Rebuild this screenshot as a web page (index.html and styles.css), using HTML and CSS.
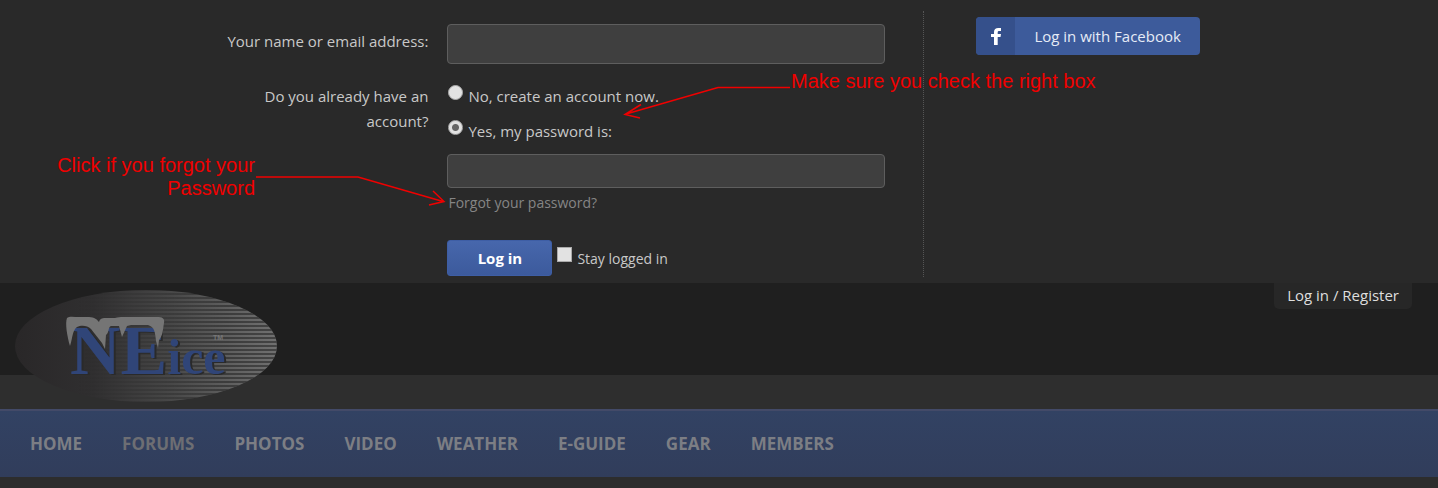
FILE: index.html
```
<!DOCTYPE html>
<html lang="en">
<head>
  <meta charset="UTF-8">
  <title>NEice - Log in</title>
  <meta name="viewport" content="width=device-width, initial-scale=1.0">
  <link rel="stylesheet" href="styles.css">
</head>
<body>

  <!-- Login panel -->
  <section class="login-panel">
    <form class="login-form">
      <label class="form-label" for="login">Your name or email address:</label>
      <input type="text" id="login" class="text-input tall">

      <div class="form-label" id="accountLabel">Do you already have an account?</div>
      <div class="form-field" role="radiogroup" aria-labelledby="accountLabel">
        <label class="choice"><input type="radio" name="register" value="1"> No, create an account now.</label>
        <label class="choice"><input type="radio" name="register" value="0" checked> Yes, my password is:</label>
        <input type="password" id="password" class="text-input" aria-label="Password">
        <a href="#" class="forgot">Forgot your password?</a>
      </div>

      <div class="form-submit">
        <button type="submit" class="login-button">Log in</button>
        <label class="choice small"><input type="checkbox" name="remember"> Stay logged in</label>
      </div>

      <!-- Help notes -->
      <p class="note note-box">Make sure you check the right box</p>
      <p class="note note-forgot">Click if you forgot your Password</p>
      <svg class="note-arrows" width="924" height="283" viewBox="0 0 924 283" fill="none" stroke="#f00000" stroke-width="1.5">
        <path d="M790 87.500H718L626 114M641 104.500L625 114.500L640 118"/>
        <path d="M256 177H358L443 201.500M433 191L444 201.500L429 205"/>
      </svg>
    </form>

    <aside class="login-social">
      <a href="#" class="fb-button">
        <span class="fb-icon">
          <svg width="10" height="17" viewBox="0 0 10 17"><path fill="#fff" d="M10 0v3H8.200C7 3 6.700 3.500 6.700 4.500V6H10L9.500 9H6.700v8H3V9H0V6h3V4C3 1.300 4.700 0 7.200 0z"/></svg>
        </span>
        <span class="fb-text">Log in with Facebook</span>
      </a>
    </aside>
  </section>

  <!-- Header -->
  <header class="site-header">
    <a href="#" class="logo" aria-label="NEice">
      <svg width="266" height="114" viewBox="0 0 266 114">
        <defs>
          <linearGradient id="shade">
            <stop offset="0" stop-color="#292728"/>
            <stop offset="0.3" stop-color="#302f30"/>
            <stop offset="0.6" stop-color="#484848"/>
            <stop offset="0.85" stop-color="#626262"/>
            <stop offset="1" stop-color="#707070"/>
          </linearGradient>
          <linearGradient id="fade">
            <stop offset="0.25" stop-color="#fff" stop-opacity="0"/>
            <stop offset="0.8" stop-color="#fff" stop-opacity="1"/>
          </linearGradient>
          <pattern id="lines" width="4" height="4" patternUnits="userSpaceOnUse">
            <rect width="4" height="2" fill="#272727"/>
          </pattern>
          <mask id="lineMask"><rect width="266" height="114" fill="url(#fade)"/></mask>
        </defs>
        <ellipse cx="134" cy="57" rx="131" ry="56" fill="url(#shade)"/>
        <ellipse cx="134" cy="57" rx="131" ry="56" fill="url(#lines)" mask="url(#lineMask)" opacity="0.6"/>
        <text class="logo-text" x="58" y="85"><tspan font-size="70">NE</tspan><tspan font-size="50">ice</tspan></text>
        <!-- snow caps -->
        <path fill="#757575" d="M55 29C57 27 62 28 67 28H75C81 28 84 29 87 33C88 29 91 29 95 29H103C106 28 108 28 111 28H145C150 28 153 29 152 34C151 39 151 47 147 51L146 59L144 52C143 44 143 38 136 36H119L115 37L110 48L107 37H99C96 38 97 44 94 46L93 60L90 54L79 40C75 36 69 36 65 38C60 42 61 48 58 57C55 47 53 34 55 29Z"/>
        <text class="logo-tm" x="201" y="51">TM</text>
      </svg>
    </a>
    <a href="#" class="login-tab">Log in / Register</a>
  </header>

  <nav class="main-nav">
    <a href="#">Home</a>
    <a href="#" class="selected">Forums</a>
    <a href="#">Photos</a>
    <a href="#">Video</a>
    <a href="#">Weather</a>
    <a href="#">E-Guide</a>
    <a href="#">Gear</a>
    <a href="#">Members</a>
  </nav>

</body>
</html>
```
FILE: styles.css
```
* {
  box-sizing: border-box;
}

body {
  margin: 0;
  font-family: 'Open Sans', sans-serif;
  font-size: 15px;
  line-height: 25px;
  color: #c8c8c8;
  background: #2d2d2d;
}

a {
  text-decoration: none;
}

/* Login panel */
.login-panel {
  position: relative;
  display: grid;
  grid-template-columns: 9fr 5fr;
  padding: 11px 0 6px;
  background: #292929;
}

.login-form {
  display: grid;
  grid-template-columns: 1fr 438px;
  column-gap: 19px;
  row-gap: 20px;
  padding: 13px 38px 1px 0;
  border-right: 1px dotted #555;
}

.form-label {
  justify-self: end;
  max-width: 204px;
  text-align: right;
}

label.form-label {
  padding-top: 5px;
}

div.form-label {
  max-width: 180px;
}

.text-input {
  display: block;
  width: 100%;
  height: 34px;
  padding: 4px 8px;
  font: inherit;
  color: #ddd;
  background: #3f3f3f;
  border: 1px solid #5e5e5e;
  border-radius: 4px;
}

.text-input.tall {
  height: 40px;
}

.form-field {
  display: flex;
  flex-direction: column;
  gap: 10px;
}

.choice {
  display: flex;
  gap: 5px;
}

.choice input {
  appearance: none;
  width: 15px;
  height: 15px;
  margin: 1px 0 0 1px;
  background: #e2e2e2;
  border: 1px solid #aaa;
}

.choice input[type="radio"] {
  border-radius: 50%;
}

.choice input[type="radio"]:checked {
  background: radial-gradient(circle, #666 0 3px, #e2e2e2 4px);
}

.forgot {
  margin-top: -8px;
  padding-left: 1px;
  font-size: 14px;
  color: #858585;
}

.form-submit {
  grid-column: 2;
  display: flex;
  gap: 4px;
  padding-top: 5px;
}

.choice.small {
  padding-top: 6px;
  font-size: 14px;
}

.login-button {
  width: 105px;
  height: 36px;
  font: bold 15px 'Open Sans', sans-serif;
  color: #fff;
  background: linear-gradient(#4767ac, #3c5a9c);
  border: 1px solid #3e5ea5;
  border-radius: 3px;
}

.login-social {
  padding: 6px 0 0 52px;
}

.fb-button {
  display: inline-flex;
  height: 38px;
  line-height: 38px;
  color: #e6ebf6;
  background: #3d5b9b;
  border-radius: 4px;
  overflow: hidden;
}

.fb-icon {
  display: flex;
  align-items: center;
  justify-content: center;
  width: 39px;
  background: #35508b;
}

.fb-text {
  padding: 0 19px;
}

/* Help notes */
.note {
  position: absolute;
  margin: 0;
  font: 20px/23px 'Liberation Sans', sans-serif;
  color: #f00000;
}

.note-box {
  top: 70px;
  left: 791px;
}

.note-forgot {
  top: 154px;
  left: 45px;
  width: 210px;
  text-align: right;
}

.note-arrows {
  position: absolute;
  top: 0;
  left: 0;
  pointer-events: none;
}

/* Header */
.site-header {
  display: flex;
  justify-content: space-between;
  align-items: flex-start;
  padding: 0 26px 0 12px;
  background: linear-gradient(#1f1f1f 92px, #2e2e2e 92px);
}

.logo {
  display: block;
  padding: 6px 0;
}

.logo svg {
  display: block;
}

.logo-text {
  font-family: 'Liberation Serif', serif;
  font-weight: bold;
  fill: #304578;
  filter: drop-shadow(2px 1px 0 #2a2a2a);
}

.logo-tm {
  font-family: 'Liberation Sans', sans-serif;
  font-size: 7px;
  font-weight: bold;
  fill: #777;
}

.login-tab {
  padding: 0 13px 1px;
  color: #dedede;
  background: #272727;
  border-radius: 0 0 5px 5px;
}

/* Navigation */
.main-nav {
  display: flex;
  flex-wrap: wrap;
  padding: 0 10px;
  border-top: 2px solid #434a68;
  background: linear-gradient(#324263, #313d5b);
}

.main-nav a {
  padding: 0 20px;
  font-size: 17px;
  font-weight: bold;
  line-height: 66px;
  text-transform: uppercase;
  color: #7c7e84;
}

.main-nav a.selected {
  color: #6d6e73;
}
```
